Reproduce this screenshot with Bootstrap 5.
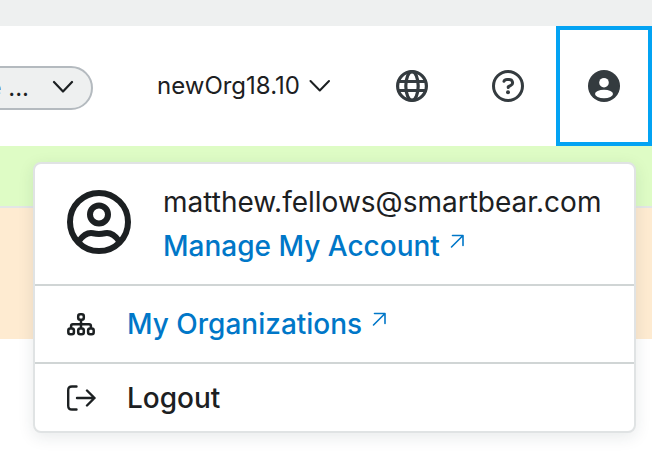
<!DOCTYPE html>
<html lang="en">
<head>
<meta charset="utf-8">
<meta name="viewport" content="width=device-width, initial-scale=1">
<title>Account menu</title>
<link href="https://cdn.jsdelivr.net/npm/bootstrap@5.3.0/dist/css/bootstrap.min.css" rel="stylesheet">
<style>
body{font-family:Inter,"Liberation Sans",sans-serif;color:#1c2022;background:#fff;height:466px;overflow:hidden}
svg{display:block;flex:none}
.top-strip{height:26px;background:#eef0f0}
.site-header{height:120px;background:#fff;color:#343a3f}
.project-pill{width:113px;height:44px;margin:4px 0 0 -20px;padding:0 17px 0 0;border:2px solid #b4babf;border-radius:22px;background:#eef0f0;font-size:24px;color:#1c2022}
.pill-text{line-height:40px;white-space:pre;margin-right:23px}
.org-switch{margin-left:64px;font-size:24px;color:#1c2022;line-height:40px}
.header-icon{width:96px;height:120px}
.header-icon.selected{border:4px solid #03a3f3}
.notice-green{height:62px;background:#defcc5;border-bottom:2px solid #e3e6e6}
.notice-orange{height:131px;background:#feebd1}
.account-menu{left:33px;top:162px;width:603px;height:271px;border:2px solid #e0e3e4;border-radius:8px;box-shadow:0 4px 16px rgba(30,50,60,.1);font-size:28px;line-height:44px;background:#fff}
.menu-row{border-bottom:2px solid #d0d5d5;padding-left:32px}
.row-account{height:122px}
.row-orgs{height:78px}
.row-logout{height:67px;border:0}
.account-menu a{color:#0077c8}
.menu-label{font-weight:500}
.user-mark{margin:26px 32px 0 0}
.external-mark{margin:10px 0 0 10px}
</style>
<script src="https://cdn.jsdelivr.net/npm/bootstrap@5.3.0/dist/js/bootstrap.bundle.min.js"></script>
</head>
<body>
<div class="top-strip"></div>
<header class="site-header d-flex align-items-center">
  <div class="project-pill d-flex align-items-center justify-content-end">
    <span class="pill-text">e ...</span>
    <svg class="mb-1" width="22" height="14" viewBox="0 0 22 14" fill="none" stroke="#1c2022" stroke-width="2.2" stroke-linecap="round" stroke-linejoin="round"><path d="M2 3l9 9.500 9-9.500"/></svg>
  </div>
  <div class="org-switch d-flex align-items-center">
    <span class="org-name">newOrg18.10</span>
    <svg class="ms-2" width="22" height="14" viewBox="0 0 22 14" fill="none" stroke="#1c2022" stroke-width="2" stroke-linecap="round" stroke-linejoin="round"><path d="M2.500 2l9.300 9.500L21 2"/></svg>
  </div>
  <div class="d-flex ms-auto">
    <div class="header-icon d-flex align-items-center justify-content-center">
      <svg width="32" height="32" viewBox="0 0 32 32" fill="none" stroke="#343b3f" stroke-width="3.200"><circle cx="16" cy="16" r="14.400"/><ellipse cx="16" cy="16" rx="6.200" ry="14.400"/><path d="M2.500 11.500h27M2.500 20.500h27"/></svg>
    </div>
    <div class="header-icon d-flex align-items-center justify-content-center">
      <svg width="32" height="32" viewBox="0 0 32 32" fill="none" stroke="#343b3f" stroke-width="3" stroke-linecap="round" stroke-linejoin="round"><circle cx="16" cy="16" r="14.500"/><path d="M12 11.300c.5-1.300 1.500-1.800 3-1.800h2c3.900 0 4.600 4.300 2 5.700l-2.800 1.700v.6"/><circle cx="16" cy="22.200" r="2" fill="#343b3f" stroke="none"/></svg>
    </div>
    <div class="header-icon selected d-flex align-items-center justify-content-center">
      <svg width="32" height="32" viewBox="0 0 32 32"><circle cx="16" cy="16" r="16" fill="#343b3f"/><circle cx="16" cy="12.700" r="4.800" fill="#fff"/><ellipse cx="16" cy="24" rx="9" ry="4.200" fill="#fff"/></svg>
    </div>
  </div>
</header>
<div class="notice-green"></div>
<div class="notice-orange"></div>

<div class="account-menu position-absolute">
  <div class="menu-row row-account d-flex align-items-start">
    <svg class="user-mark" width="64" height="64" viewBox="0 0 64 64" fill="none" stroke="#1c2022" stroke-width="6"><circle cx="32" cy="32" r="29"/><circle cx="32" cy="24.500" r="9"/><path d="M12 51C17 44 22 42.500 26 43.300c4 .8 8 .8 12 0C42 42.500 47 44 52 51"/></svg>
    <div class="pt-3">
      <div class="email">matthew.fellows@smartbear.com</div>
      <a class="menu-label d-flex text-decoration-none" href="#">Manage My Account
        <svg class="external-mark" width="15" height="15" viewBox="0 0 15 15" fill="none" stroke="currentColor" stroke-width="1.600" stroke-linecap="round" stroke-linejoin="round"><path d="M1.500 13L13 1.500M2.500 1.500H13V11.500"/></svg></a>
    </div>
  </div>
  <div class="menu-row row-orgs d-flex align-items-center">
    <svg style="margin-right:32px" width="28" height="24" viewBox="0 0 28 24" fill="none" stroke="#1c2022" stroke-width="2.500"><rect x="11.200" y="2.200" width="5.600" height="5.600" rx="2"/><rect x="1.300" y="16.600" width="5.600" height="5.600" rx="2"/><rect x="11.200" y="16.600" width="5.600" height="5.600" rx="2"/><rect x="21.100" y="16.600" width="5.600" height="5.600" rx="2"/><path d="M14 8v8.500M4.100 16.500V14q0-1.800 1.800-1.800h16.200q1.800 0 1.800 1.800v2.500"/></svg>
    <a class="menu-label d-flex text-decoration-none" href="#">My Organizations
      <svg class="external-mark" width="15" height="15" viewBox="0 0 15 15" fill="none" stroke="currentColor" stroke-width="1.600" stroke-linecap="round" stroke-linejoin="round"><path d="M1.500 13L13 1.500M2.500 1.500H13V11.500"/></svg></a>
  </div>
  <div class="menu-row row-logout d-flex align-items-center">
    <svg style="margin-right:31px" width="29" height="26" viewBox="0 0 29 26" fill="none" stroke="#1c2022" stroke-width="2.400" stroke-linecap="round" stroke-linejoin="round"><path d="M9.500 1.500H5Q1.200 1.500 1.200 5.300V20.700Q1.200 24.500 5 24.500H9.500M10 13H27.500M20 5.500l7.500 7.500-7.500 7.500"/></svg>
    <span class="menu-label">Logout</span>
  </div>
</div>
</body>
</html>
